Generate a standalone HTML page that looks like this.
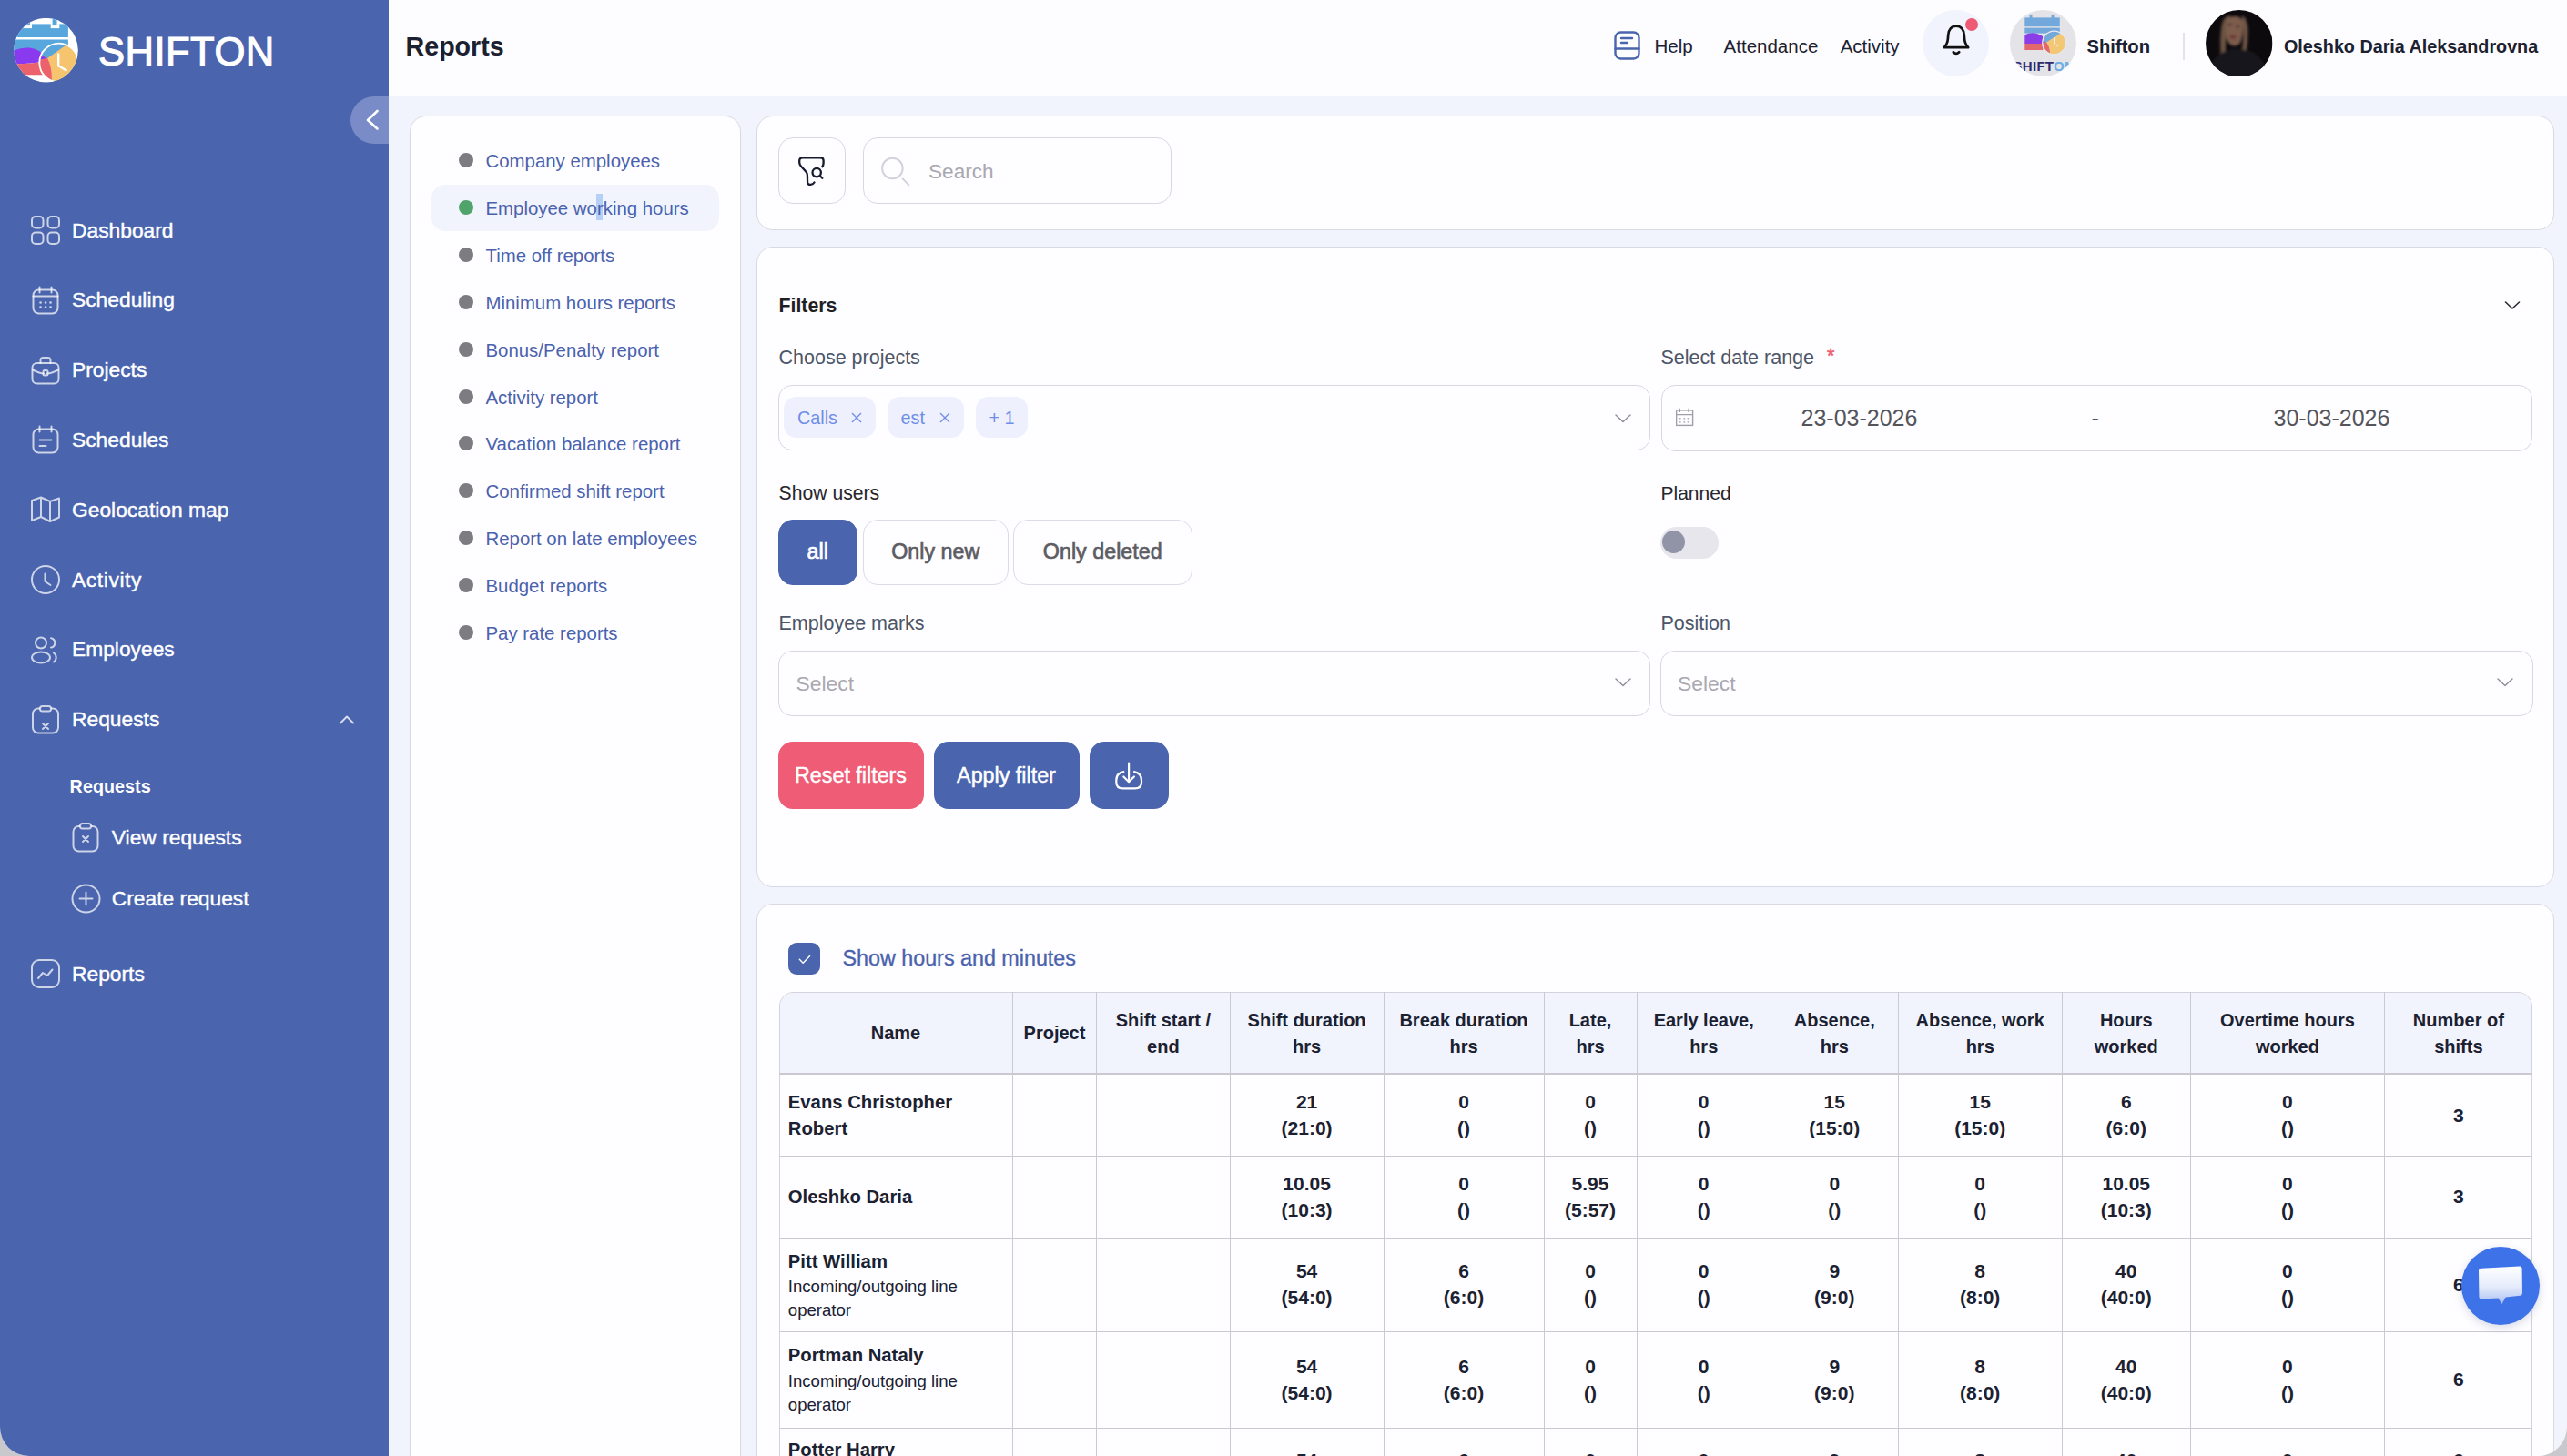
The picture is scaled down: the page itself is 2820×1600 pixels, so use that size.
<!DOCTYPE html>
<html><head><meta charset="utf-8">
<style>
*{box-sizing:border-box;margin:0;padding:0}
html,body{width:2820px;height:1600px;overflow:hidden;background:#c9c8cc}
body{font-family:"Liberation Sans",sans-serif;position:relative}
.abs{position:absolute}
.t{position:absolute;white-space:nowrap}
#win{position:absolute;left:0;top:0;width:2820px;height:1600px;overflow:hidden;border-radius:0 0 32px 32px;background:#f1f3fd}
#side{position:absolute;left:0;top:0;width:427px;height:1600px;background:#4a64ae}
#hdr{position:absolute;left:427px;top:0;width:2393px;height:106px;background:#fdfcfe}
.card{position:absolute;background:#fefdff;border:1.5px solid #d9d9e1;border-radius:18px}
.nav{position:absolute;left:0;height:40px;width:427px}
.nav .ic{position:absolute;left:34px;top:4px;width:32px;height:32px}
.nav .lb{position:absolute;left:79px;top:-0.5px;line-height:40px;font-size:22.8px;color:#fff;white-space:nowrap;-webkit-text-stroke:0.4px #fff}
.rl{position:absolute;left:0;height:40px;width:363px}
.rl .dot{position:absolute;left:52.6px;top:12px;width:16px;height:16px;border-radius:50%;background:#7d7c81}
.rl .lb{position:absolute;left:82.5px;top:1px;line-height:40px;font-size:20.4px;color:#4a62ad;white-space:nowrap}
.lbl{position:absolute;font-size:21.5px;color:#4c5668;line-height:30px;white-space:nowrap}
.box{position:absolute;border:1.5px solid #d8d8e2;border-radius:15px;background:#fefdff}
.btn{position:absolute;border-radius:16px;color:#fff;font-size:23.3px;line-height:74px;text-align:center;-webkit-text-stroke:0.45px #fff}
.chip{background:#eef1fd;border-radius:14px}
.chip span{position:absolute;top:7.5px;line-height:30px;font-size:19.8px;color:#6f8ee8;white-space:nowrap}
.chip svg.x{position:absolute;top:14.5px;width:16px;height:16px;fill:none;stroke:#6f8ee8;stroke-width:1.4}
.seg{border:1.5px solid #dcdbe6;border-radius:16px;background:#fefdff;font-size:23.3px;font-weight:400;color:#5c5c62;-webkit-text-stroke:0.65px #5c5c62;text-align:center;line-height:69px}
.seg.on{background:#4a64ae;border-color:#4a64ae;color:#fff;-webkit-text-stroke:0.7px #fff}
.th{position:absolute;text-align:center;font-size:20px;font-weight:700;line-height:29.5px;color:#1b2130;white-space:nowrap}
.tn{position:absolute;font-size:20.3px;font-weight:700;line-height:29.3px;color:#1b2130;white-space:nowrap}
.tp{position:absolute;font-size:18.6px;line-height:26px;color:#1b2130;white-space:nowrap}
.td{position:absolute;text-align:center;font-size:21px;font-weight:700;line-height:29.3px;color:#1b2130;white-space:nowrap}
</style></head><body>
<div id="win">
  <!-- SIDEBAR -->
  <div id="side">
    <svg class="abs" style="left:15.2px;top:19.8px" width="71" height="71" viewBox="0 0 71 71">
      <defs><clipPath id="lc"><circle cx="35.5" cy="35.2" r="35.3"/></clipPath>
      <clipPath id="cc"><circle cx="49.7" cy="49" r="20.6"/></clipPath></defs>
      <circle cx="35.5" cy="35.2" r="35.3" fill="#fff"/>
      <g clip-path="url(#lc)">
        <rect x="-2" y="6.4" width="61.9" height="14.6" fill="#57a6dc"/>
        <rect x="10.7" y="0.7" width="9.3" height="10.4" fill="#fff"/>
        <rect x="12.6" y="-1" width="5.3" height="9.1" fill="#57a6dc"/>
        <rect x="40.7" y="0.7" width="9.6" height="10.4" fill="#fff"/>
        <rect x="42.6" y="-1" width="4.9" height="9.1" fill="#57a6dc"/>
        <rect x="-2" y="23.5" width="61.9" height="14" fill="#57a6dc"/>
        <path d="M-2 36.5 C4 34 10 32.5 15 32.5 C22 32.5 27 35 32 39 L32 48 C22 49.5 10 50.5 -2 50 Z" fill="#8a3aee"/>
        <path d="M-2 50 C10 50.5 22 49.5 32 48 L32 62.2 L-2 62.2 Z" fill="#ec626c"/>
        <g clip-path="url(#cc)">
          <rect x="25" y="25" width="50" height="50" fill="#f6c46e"/>
          <path d="M37.1 44 L55.2 31.2 L72 18 L22 18 L22 36 Z" fill="#57a6dc"/>
          <path d="M37.1 44 L22 36.5 L22 47.5 Z" fill="#8a3aee"/>
          <path d="M37.1 44 L22 47.5 L22 75 L41.5 75 C42.5 62 41.5 52 37.1 44 Z" fill="#ec626c"/>
        </g>
        <circle cx="49.7" cy="49" r="21.4" fill="none" stroke="#fff" stroke-width="1.8"/>
        <path d="M49.2 38.6 L49.2 52.3 L58.5 57.8" fill="none" stroke="#fff" stroke-width="2.4"/>
      </g>
    </svg>
    <div class="t" style="left:108px;top:26.8px;font-size:43.6px;line-height:60px;color:#fff;font-weight:400;letter-spacing:0.45px;-webkit-text-stroke:1.1px #fff">SHIFTON</div>

    <div class="abs" style="left:385px;top:106px;width:42px;height:52px;background:#7a8cc8;border-radius:26px 0 0 26px"></div>
    <svg class="abs" style="left:385px;top:106px" width="42" height="52" viewBox="0 0 42 52"><path d="M29.5 16 L19 26 L29.5 35.5" fill="none" stroke="#fff" stroke-width="2.6" stroke-linecap="round" stroke-linejoin="round"/></svg>

    <!-- nav -->
    <div class="nav" style="top:233px">
      <svg class="ic" viewBox="0 0 32 32" fill="none" stroke="rgba(255,255,255,.72)" stroke-width="2"><rect x="1" y="1" width="12.5" height="12.5" rx="4"/><rect x="18.5" y="1" width="12.5" height="12.5" rx="4"/><rect x="1" y="18.5" width="12.5" height="12.5" rx="4"/><rect x="18.5" y="18.5" width="12.5" height="12.5" rx="4"/></svg>
      <div class="lb">Dashboard</div>
    </div>
    <div class="nav" style="top:309.8px">
      <svg class="ic" viewBox="0 0 32 32" fill="none" stroke="rgba(255,255,255,.72)" stroke-width="2" stroke-linecap="round"><rect x="2.5" y="4.5" width="27" height="26" rx="6"/><path d="M9.5 1.5v6M22.5 1.5v6M2.5 11.5h27"/><g stroke-width="2.6"><path d="M10.5 18.5h.1M16 18.5h.1M21.5 18.5h.1M10.5 23.5h.1M16 23.5h.1M21.5 23.5h.1"/></g></svg>
      <div class="lb">Scheduling</div>
    </div>
    <div class="nav" style="top:386.6px">
      <svg class="ic" viewBox="0 0 32 32" fill="none" stroke="rgba(255,255,255,.72)" stroke-width="2" stroke-linecap="round" stroke-linejoin="round"><rect x="1.5" y="8" width="29" height="22.5" rx="5"/><path d="M10.5 8V5a3 3 0 0 1 3-3h5a3 3 0 0 1 3 3v3"/><path d="M2 15.5 C8 18.5 11 19.5 14 19.5 M18 19.5 C21 19.5 24 18.5 30 15.5"/><rect x="13.5" y="16" width="5" height="5.5" rx="1.5"/></svg>
      <div class="lb">Projects</div>
    </div>
    <div class="nav" style="top:463.4px">
      <svg class="ic" viewBox="0 0 32 32" fill="none" stroke="rgba(255,255,255,.72)" stroke-width="2" stroke-linecap="round"><rect x="2.5" y="4.5" width="27" height="26" rx="6"/><path d="M9.5 1.5v6M22.5 1.5v6M9.5 16.5h13M9.5 23h7"/></svg>
      <div class="lb">Schedules</div>
    </div>
    <div class="nav" style="top:540.2px">
      <svg class="ic" viewBox="0 0 32 32" fill="none" stroke="rgba(255,255,255,.72)" stroke-width="2" stroke-linejoin="round"><path d="M1 6 L11 2.5 L21 7 L31 3.5 L31 24.5 L21 29 L11 24 L1 28 Z M11 2.5 V24 M21 7 V29"/></svg>
      <div class="lb">Geolocation map</div>
    </div>
    <div class="nav" style="top:617px">
      <svg class="ic" viewBox="0 0 32 32" fill="none" stroke="rgba(255,255,255,.72)" stroke-width="2" stroke-linecap="round" stroke-linejoin="round"><circle cx="16" cy="16" r="15"/><path d="M15.5 9.5v8.5l6 4"/></svg>
      <div class="lb" style="letter-spacing:0.6px">Activity</div>
    </div>
    <div class="nav" style="top:693.8px">
      <svg class="ic" viewBox="0 0 32 32" fill="none" stroke="rgba(255,255,255,.72)" stroke-width="2" stroke-linecap="round"><circle cx="11" cy="8.5" r="6"/><ellipse cx="11" cy="24.5" rx="10" ry="6"/><path d="M22 3.2a5.3 5.3 0 0 1 0 10.4M25 19.5a6 6 0 0 1 0 10"/></svg>
      <div class="lb">Employees</div>
    </div>
    <div class="nav" style="top:770.6px">
      <svg class="ic" viewBox="0 0 32 32" fill="none" stroke="rgba(255,255,255,.72)" stroke-width="2" stroke-linecap="round"><rect x="2" y="3.5" width="28" height="27" rx="6"/><rect x="10" y="1" width="12" height="5.5" rx="2.5" fill="#4a64ae"/><path d="M13 20l6 6M19 20l-6 6"/></svg>
      <div class="lb">Requests</div>
      <svg class="abs" style="left:371px;top:13px" width="20" height="14" viewBox="0 0 20 14"><path d="M3 10.5 L10 3.5 L17 10.5" fill="none" stroke="rgba(255,255,255,.8)" stroke-width="1.8" stroke-linecap="round" stroke-linejoin="round"/></svg>
    </div>
    <div class="t" style="left:76.6px;top:849px;line-height:30px;font-size:19.8px;font-weight:700;color:#fff">Requests</div>
    <div class="nav" style="top:900px">
      <svg class="ic" style="left:78.5px;top:3.5px;width:30px;height:33px" viewBox="0 0 30 33" fill="none" stroke="rgba(255,255,255,.72)" stroke-width="2" stroke-linecap="round"><rect x="1.5" y="4" width="27" height="27.5" rx="6"/><rect x="9" y="1" width="12" height="5.5" rx="2.5" fill="#4a64ae"/><path d="M12 15l6 6M18 15l-6 6"/></svg>
      <div class="lb" style="left:122.8px">View requests</div>
    </div>
    <div class="nav" style="top:967px">
      <svg class="ic" style="left:77.5px;top:3.5px;width:33px;height:33px" viewBox="0 0 33 33" fill="none" stroke="rgba(255,255,255,.72)" stroke-width="2" stroke-linecap="round"><circle cx="16.5" cy="16.5" r="15"/><path d="M16.5 9.5v14M9.5 16.5h14"/></svg>
      <div class="lb" style="left:122.8px">Create request</div>
    </div>
    <div class="nav" style="top:1050px">
      <svg class="ic" viewBox="0 0 32 32" fill="none" stroke="rgba(255,255,255,.72)" stroke-width="2" stroke-linecap="round" stroke-linejoin="round"><rect x="1" y="1" width="30" height="30" rx="8"/><path d="M8 21 L13 15 L18 18 L23.5 11.5"/></svg>
      <div class="lb">Reports</div>
    </div>
  </div>
  <!-- HEADER -->
  <div id="hdr">
    <div class="t" style="left:18.6px;top:36px;line-height:30px;font-size:28.6px;font-weight:700;color:#1b2130">Reports</div>
    <svg class="abs" style="left:1346px;top:34px" width="29" height="32" viewBox="0 0 29 32" fill="none" stroke="#4a64ae" stroke-width="2.4" stroke-linecap="round"><rect x="1.5" y="1.5" width="26" height="29" rx="6"/><path d="M1.5 19.5h26M8 8h12M8 13h7"/></svg>
    <div class="t" style="left:1390.5px;top:36px;line-height:30px;font-size:20.5px;color:#1b2130">Help</div>
    <div class="t" style="left:1466.6px;top:36px;line-height:30px;font-size:20.5px;color:#1b2130">Attendance</div>
    <div class="t" style="left:1594.7px;top:36px;line-height:30px;font-size:20.5px;color:#1b2130">Activity</div>
    <div class="abs" style="left:1685px;top:11px;width:73px;height:73px;border-radius:50%;background:#f1f3fd"></div>
    <svg class="abs" style="left:1704px;top:24px" width="36" height="40" viewBox="0 0 36 40" fill="none" stroke="#111" stroke-width="2.7" stroke-linecap="round" stroke-linejoin="round"><path d="M4.8 28.2 C7.6 25.2 8.6 22.5 8.9 18.5 L9.2 14.5 C9.7 8.2 13.2 4.6 18 4.6 C22.8 4.6 26.3 8.2 26.8 14.5 L27.1 18.5 C27.4 22.5 28.4 25.2 31.2 28.2 Z"/><path d="M14.8 33.2 Q18 36.6 21.2 33.2"/></svg>
    <div class="abs" style="left:1731.8px;top:19.8px;width:14px;height:14px;border-radius:50%;background:#ee5a74"></div>
    <!-- shifton avatar -->
    <svg class="abs" style="left:1781px;top:11px" width="73" height="73" viewBox="0 0 73 73">
      <defs><clipPath id="ac"><circle cx="36.5" cy="36.5" r="36.5"/></clipPath><clipPath id="ac2"><circle cx="48.6" cy="36" r="12.4"/></clipPath></defs>
      <g clip-path="url(#ac)">
        <rect width="73" height="73" fill="#e4e3e7"/>
        <rect x="16.3" y="8.4" width="38.5" height="9.8" fill="#72a8dc"/>
        <rect x="21.5" y="4.9" width="3" height="5" fill="#72a8dc"/><rect x="45.5" y="4.9" width="3" height="5" fill="#72a8dc"/>
        <rect x="16.3" y="19.6" width="38.5" height="6" fill="#72a8dc"/>
        <path d="M16.3 27.5 C22 24 30 24.5 36 29 L36 37 C28 37.5 22 37.5 16.3 37 Z" fill="#8b3ee8"/>
        <rect x="16.3" y="37" width="20" height="7" fill="#e2686c"/>
        <g clip-path="url(#ac2)"><rect x="34" y="22" width="30" height="30" fill="#f2c877"/>
          <path d="M40 35.5 L52 28 L60 22 L34 22 L34 33 Z" fill="#72a8dc"/>
          <path d="M40 35.5 L34 33 L34 37 Z" fill="#8b3ee8"/>
          <path d="M40 35.5 L34 37 L34 52 L44 52 C44.5 45 43 39 40 35.5 Z" fill="#e2686c"/></g>
        <circle cx="48.6" cy="36" r="12.9" fill="none" stroke="#e9e8ee" stroke-width="1.2"/>
        <path d="M48.5 30 L48.5 37 L53 40" fill="none" stroke="#f5eee0" stroke-width="1"/>
        <text x="3.5" y="66.5" font-family="Liberation Sans" font-weight="700" font-size="15" fill="#2e2a6e" letter-spacing="0.3">SHIFT<tspan fill="#6aaee6">ON</tspan></text>
      </g>
    </svg>
    <div class="t" style="left:1865.5px;top:36px;line-height:30px;font-size:20.2px;font-weight:700;color:#1b2130">Shifton</div>
    <div class="abs" style="left:1971px;top:36px;width:1.5px;height:30px;background:#e3e3ea"></div>
    <!-- user avatar -->
    <svg class="abs" style="left:1996.3px;top:10.6px" width="73.5" height="73.5" viewBox="0 0 73.5 73.5">
      <defs><clipPath id="uc"><circle cx="36.75" cy="36.75" r="36.7"/></clipPath>
      <filter id="bl" x="-20%" y="-20%" width="140%" height="140%"><feGaussianBlur stdDeviation="1.4"/></filter></defs>
      <g clip-path="url(#uc)">
        <rect width="73.5" height="73.5" fill="#0d0a0e"/>
        <g filter="url(#bl)">
          <path d="M17 52 C15.5 38 16 22 18.5 13 C21 8 24 6 27 6 L26 14 C23 20 22 34 22 50 Z" fill="#6a5242"/>
          <path d="M40 6 C44 8 46.5 14 46.5 22 C46.5 32 46 42 44 48 L40 44 C41.5 34 42 22 40 12 Z" fill="#6e5444"/>
          <path d="M22 14 C24 8 29 6.5 34 7 C38.5 7.5 41 11 41 17 C41 25 40 33 37.5 37 C35 39.5 31 40 28 38.5 C24.5 36.5 22.5 31 22 26 Z" fill="#7b5c4c"/>
          <path d="M24.5 16.5 L28.5 16 M33.5 17.5 L37 18.5" stroke="#2e2224" stroke-width="1.6"/>
          <ellipse cx="30" cy="29.5" rx="3.6" ry="2" fill="#6e3436"/>
          <path d="M2 74 C4 54 16 44 33 43 C50 43 64 50 70 74 Z" fill="#19161b"/>
        </g>
      </g>
    </svg>
    <div class="t" style="left:2082px;top:36px;line-height:30px;font-size:19.75px;font-weight:700;color:#1b2130">Oleshko Daria Aleksandrovna</div>
  </div>
  <!-- LEFT REPORT LIST PANEL -->
  <div class="card" style="left:450px;top:127px;width:364px;height:1520px">
    <div class="abs" style="left:22.5px;top:75px;width:316px;height:51px;border-radius:15px;background:#f1f3fd"></div>
    <div class="rl" style="top:28.0px"><div class="dot"></div><div class="lb">Company employees</div></div>
    <div class="rl" style="top:79.9px"><div class="dot" style="background:#4fa36b"></div><div class="abs" style="left:204.3px;top:5.5px;width:7px;height:28.8px;background:#b6cff8"></div><div class="lb">Employee working hours</div></div>
    <div class="rl" style="top:131.8px"><div class="dot"></div><div class="lb">Time off reports</div></div>
    <div class="rl" style="top:183.7px"><div class="dot"></div><div class="lb">Minimum hours reports</div></div>
    <div class="rl" style="top:235.6px"><div class="dot"></div><div class="lb">Bonus/Penalty report</div></div>
    <div class="rl" style="top:287.5px"><div class="dot"></div><div class="lb">Activity report</div></div>
    <div class="rl" style="top:339.4px"><div class="dot"></div><div class="lb">Vacation balance report</div></div>
    <div class="rl" style="top:391.3px"><div class="dot"></div><div class="lb">Confirmed shift report</div></div>
    <div class="rl" style="top:443.2px"><div class="dot"></div><div class="lb">Report on late employees</div></div>
    <div class="rl" style="top:495.1px"><div class="dot"></div><div class="lb">Budget reports</div></div>
    <div class="rl" style="top:547.0px"><div class="dot"></div><div class="lb">Pay rate reports</div></div>
  </div>
  <!-- TOP SEARCH CARD -->
  <div class="card" style="left:831px;top:127px;width:1974.5px;height:126px">
    <div class="box" style="left:22.5px;top:22.5px;width:74px;height:73px;border-radius:16px"></div>
    <svg class="abs" style="left:43px;top:41.5px" width="40" height="40" viewBox="0 0 40 40" fill="none" stroke="#161b2e" stroke-width="2.3" stroke-linecap="round" stroke-linejoin="round"><path d="M19.5 30.5 C17.8 33.2 13.2 34 12.1 30.8 L11.9 22.5 C11.9 20.5 11 19.2 9.8 18 L5.2 13 C3.8 11.5 3.2 10.2 3.2 8.5 L3.2 6.5 C3.2 4.6 4.6 3.3 6.5 3.3 L26.5 3.3 C28.4 3.3 29.6 4.6 29.6 6.5 L29.6 9 C29.6 10.8 29.2 12 28.3 13.2"/><circle cx="22.2" cy="19.6" r="4.7"/><path d="M25.8 23.3 L28.3 25.8"/></svg>
    <div class="box" style="left:116px;top:22.5px;width:338.5px;height:73px;border-radius:16px"></div>
    <svg class="abs" style="left:135px;top:43px" width="34" height="34" viewBox="0 0 34 34" fill="none" stroke="#d3d0de" stroke-width="1.9" stroke-linecap="round"><circle cx="13.4" cy="14" r="11.3"/><path d="M24.6 25.4 L31.4 32.3"/></svg>
    <div class="t" style="left:188px;top:45.5px;line-height:30px;font-size:22.6px;color:#a9a8b0">Search</div>
  </div>
  <!-- FILTER CARD -->
  <div class="card" style="left:831px;top:271px;width:1974.5px;height:704px">
    <div class="t" style="left:23.5px;top:48.5px;line-height:30px;font-size:21.3px;font-weight:700;color:#1f1f24">Filters</div>
    <svg class="abs" style="left:1915px;top:53px" width="26" height="20" viewBox="0 0 26 20"><path d="M5.5 7 L13 14 L20.5 7" fill="none" stroke="#2a2a30" stroke-width="1.6" stroke-linecap="round" stroke-linejoin="round"/></svg>
    <div class="lbl" style="left:23.5px;top:105.5px">Choose projects</div>
    <div class="lbl" style="left:992.5px;top:105.5px">Select date range <span style="color:#ee5a6f;position:relative;left:8px;top:-2px;-webkit-text-stroke:0.5px #ee5a6f">*</span></div>
    <!-- projects select -->
    <div class="box" style="left:22.5px;top:150.5px;width:958px;height:72.5px">
      <div class="abs chip" style="left:5px;top:12.5px;width:101px;height:45px"><span style="left:15.5px">Calls</span><svg class="x" style="left:72px"><path d="M3 3l10 10M13 3L3 13"/></svg></div>
      <div class="abs chip" style="left:119px;top:12.5px;width:84px;height:45px"><span style="left:15px">est</span><svg class="x" style="left:55px"><path d="M3 3l10 10M13 3L3 13"/></svg></div>
      <div class="abs chip" style="left:216px;top:12.5px;width:57px;height:45px"><span style="left:15px">+ 1</span></div>
      <svg class="abs" style="left:915px;top:26px" width="24" height="20" viewBox="0 0 24 20"><path d="M4 6 L12 13.5 L20 6" fill="none" stroke="#8e8e98" stroke-width="1.4" stroke-linecap="round" stroke-linejoin="round"/></svg>
    </div>
    <!-- date range -->
    <div class="box" style="left:993px;top:151px;width:957px;height:72.5px">
      <svg class="abs" style="left:15.3px;top:23.8px" width="22" height="22" viewBox="0 0 22 22" fill="none" stroke="#a09fa7" stroke-width="1.4"><rect x="0.6" y="2.9" width="18" height="16.5"/><path d="M0.6 7.6h18M4.3 0.8v4.2M14.1 0.8v4.2"/><path d="M3.8 11.8h1.8M8.4 11.8h1.8M12.6 11.8h1.8M3.8 15.9h1.8M8.4 15.9h1.8M12.6 15.9h1.8" stroke-width="1.2"/></svg>
      <div class="t" style="left:152.5px;top:19.5px;line-height:30px;font-size:25px;color:#54545b">23-03-2026</div>
      <div class="t" style="left:471.5px;top:19.5px;line-height:30px;font-size:25px;color:#54545b">-</div>
      <div class="t" style="left:671.5px;top:19.5px;line-height:30px;font-size:25px;color:#54545b">30-03-2026</div>
    </div>
    <!-- show users -->
    <div class="t" style="left:23.5px;top:255px;line-height:30px;font-size:21.2px;color:#26262b">Show users</div>
    <div class="t" style="left:992.5px;top:255px;line-height:30px;font-size:21px;color:#26262b">Planned</div>
    <div class="abs seg on" style="left:22.5px;top:299px;width:87.5px;height:72px">all</div>
    <div class="abs seg" style="left:115.5px;top:299px;width:160.5px;height:72px">Only new</div>
    <div class="abs seg" style="left:281px;top:299px;width:196.5px;height:72px">Only deleted</div>
    <div class="abs" style="left:992px;top:306.5px;width:64px;height:35px;border-radius:18px;background:#e7e6ec"></div>
    <div class="abs" style="left:994.3px;top:311.3px;width:25px;height:25px;border-radius:50%;background:#9094a6"></div>
    <!-- marks / position -->
    <div class="lbl" style="left:23.5px;top:397.5px">Employee marks</div>
    <div class="lbl" style="left:992.5px;top:397.5px">Position</div>
    <div class="box" style="left:22.5px;top:442.5px;width:958px;height:72px">
      <div class="t" style="left:19px;top:20px;line-height:30px;font-size:22.9px;color:#aaa9b0">Select</div>
      <svg class="abs" style="left:915px;top:24px" width="24" height="20" viewBox="0 0 24 20"><path d="M4 6 L12 13.5 L20 6" fill="none" stroke="#8e8e98" stroke-width="1.4" stroke-linecap="round" stroke-linejoin="round"/></svg>
    </div>
    <div class="box" style="left:992px;top:442.5px;width:958.5px;height:72px">
      <div class="t" style="left:18px;top:20px;line-height:30px;font-size:22.9px;color:#aaa9b0">Select</div>
      <svg class="abs" style="left:914.5px;top:24px" width="24" height="20" viewBox="0 0 24 20"><path d="M4 6 L12 13.5 L20 6" fill="none" stroke="#8e8e98" stroke-width="1.4" stroke-linecap="round" stroke-linejoin="round"/></svg>
    </div>
    <!-- buttons -->
    <div class="btn" style="left:22.5px;top:543px;width:160px;height:74px;background:#ee5c76">Reset filters</div>
    <div class="btn" style="left:193.5px;top:543px;width:160px;height:74px;background:#4a64ae">Apply filter</div>
    <div class="btn" style="left:364.5px;top:543px;width:87px;height:74px;background:#4a64ae"></div>
    <svg class="abs" style="left:389px;top:561.7px" width="40" height="44" viewBox="0 0 40 44" fill="none" stroke="#fff" stroke-width="2.2" stroke-linecap="round" stroke-linejoin="round"><path d="M19.1 4.6 V25.2 M13.3 19.5 L19.1 25.3 L24.9 19.5"/><path d="M13.3 14.2 C8.5 15.2 5.3 18.5 5.3 23.5 V25.5 C5.3 29.8 8 32.4 12.5 32.4 H25.8 C30.3 32.4 33 29.8 33 25.5 V23.5 C33 18.5 29.8 15.2 25 14.2"/></svg>
  </div>
  <!-- TABLE CARD -->
  <div class="card" style="left:831px;top:993px;width:1974.5px;height:700px">
    <div class="abs" style="left:33.8px;top:41.5px;width:35.5px;height:35.5px;border-radius:9px;background:#4a64ae"></div>
    <svg class="abs" style="left:34.3px;top:41.5px" width="35" height="35" viewBox="0 0 35 35"><path d="M12.3 18.3 L16.2 22.3 L23.6 14.4" fill="none" stroke="#fff" stroke-width="1.4" stroke-linecap="round" stroke-linejoin="round"/></svg>
    <div class="t" style="left:93.5px;top:43.5px;line-height:30px;font-size:23.3px;color:#4a62ad;-webkit-text-stroke:0.35px #4a62ad">Show hours and minutes</div>
  </div>
<!-- TABLE -->
<div class="abs" style="left:855.5px;top:1090.0px;width:1926.6999999999998px;height:610.0px;border:1.5px solid #d4d3db;border-bottom:none;border-radius:16px 16px 0 0;overflow:hidden">
<div class="abs" style="left:0;top:0;width:100%;height:88.5px;background:#f1f3fd"></div>
</div>
<div class="abs" style="left:1112px;top:1090.0px;width:1px;height:510.0px;background:#cbcad0"></div>
<div class="abs" style="left:1204px;top:1090.0px;width:1px;height:510.0px;background:#cbcad0"></div>
<div class="abs" style="left:1351px;top:1090.0px;width:1px;height:510.0px;background:#cbcad0"></div>
<div class="abs" style="left:1520px;top:1090.0px;width:1px;height:510.0px;background:#cbcad0"></div>
<div class="abs" style="left:1696px;top:1090.0px;width:1px;height:510.0px;background:#cbcad0"></div>
<div class="abs" style="left:1798px;top:1090.0px;width:1px;height:510.0px;background:#cbcad0"></div>
<div class="abs" style="left:1945px;top:1090.0px;width:1px;height:510.0px;background:#cbcad0"></div>
<div class="abs" style="left:2085px;top:1090.0px;width:1px;height:510.0px;background:#cbcad0"></div>
<div class="abs" style="left:2265px;top:1090.0px;width:1px;height:510.0px;background:#cbcad0"></div>
<div class="abs" style="left:2406px;top:1090.0px;width:1px;height:510.0px;background:#cbcad0"></div>
<div class="abs" style="left:2619px;top:1090.0px;width:1px;height:510.0px;background:#cbcad0"></div>
<div class="abs" style="left:855.5px;top:1179px;width:1926.6999999999998px;height:2px;background:#c9c9cf"></div>
<div class="abs" style="left:855.5px;top:1270px;width:1926.6999999999998px;height:1px;background:#cbcad0"></div>
<div class="abs" style="left:855.5px;top:1360px;width:1926.6999999999998px;height:1px;background:#cbcad0"></div>
<div class="abs" style="left:855.5px;top:1463px;width:1926.6999999999998px;height:1px;background:#cbcad0"></div>
<div class="abs" style="left:855.5px;top:1569px;width:1926.6999999999998px;height:1px;background:#cbcad0"></div>
<div class="th" style="left:855.5px;top:1121.25px;width:256.9000000000001px">Name</div>
<div class="th" style="left:1112.4px;top:1121.25px;width:92.19999999999982px">Project</div>
<div class="th" style="left:1204.6px;top:1106.5px;width:146.60000000000014px">Shift start /<br>end</div>
<div class="th" style="left:1351.2px;top:1106.5px;width:168.79999999999995px">Shift duration<br>hrs</div>
<div class="th" style="left:1520px;top:1106.5px;width:176px">Break duration<br>hrs</div>
<div class="th" style="left:1696px;top:1106.5px;width:102px">Late,<br>hrs</div>
<div class="th" style="left:1798px;top:1106.5px;width:147.4000000000001px">Early leave,<br>hrs</div>
<div class="th" style="left:1945.4px;top:1106.5px;width:139.79999999999973px">Absence,<br>hrs</div>
<div class="th" style="left:2085.2px;top:1106.5px;width:180.0px">Absence, work<br>hrs</div>
<div class="th" style="left:2265.2px;top:1106.5px;width:141.20000000000027px">Hours<br>worked</div>
<div class="th" style="left:2406.4px;top:1106.5px;width:213.0999999999999px">Overtime hours<br>worked</div>
<div class="th" style="left:2619.5px;top:1106.5px;width:162.69999999999982px">Number of<br>shifts</div>
<div class="tn" style="left:865.8px;top:1196.8500000000001px">Evans Christopher<br>Robert</div>
<div class="td" style="left:1351.2px;top:1195.8500000000001px;width:168.79999999999995px">21<br>(21:0)</div>
<div class="td" style="left:1520px;top:1195.8500000000001px;width:176px">0<br>()</div>
<div class="td" style="left:1696px;top:1195.8500000000001px;width:102px">0<br>()</div>
<div class="td" style="left:1798px;top:1195.8500000000001px;width:147.4000000000001px">0<br>()</div>
<div class="td" style="left:1945.4px;top:1195.8500000000001px;width:139.79999999999973px">15<br>(15:0)</div>
<div class="td" style="left:2085.2px;top:1195.8500000000001px;width:180.0px">15<br>(15:0)</div>
<div class="td" style="left:2265.2px;top:1195.8500000000001px;width:141.20000000000027px">6<br>(6:0)</div>
<div class="td" style="left:2406.4px;top:1195.8500000000001px;width:213.0999999999999px">0<br>()</div>
<div class="td" style="left:2619.5px;top:1210.5px;width:162.69999999999982px">3</div>
<div class="tn" style="left:865.8px;top:1301.25px">Oleshko Daria</div>
<div class="td" style="left:1351.2px;top:1285.6000000000001px;width:168.79999999999995px">10.05<br>(10:3)</div>
<div class="td" style="left:1520px;top:1285.6000000000001px;width:176px">0<br>()</div>
<div class="td" style="left:1696px;top:1285.6000000000001px;width:102px">5.95<br>(5:57)</div>
<div class="td" style="left:1798px;top:1285.6000000000001px;width:147.4000000000001px">0<br>()</div>
<div class="td" style="left:1945.4px;top:1285.6000000000001px;width:139.79999999999973px">0<br>()</div>
<div class="td" style="left:2085.2px;top:1285.6000000000001px;width:180.0px">0<br>()</div>
<div class="td" style="left:2265.2px;top:1285.6000000000001px;width:141.20000000000027px">10.05<br>(10:3)</div>
<div class="td" style="left:2406.4px;top:1285.6000000000001px;width:213.0999999999999px">0<br>()</div>
<div class="td" style="left:2619.5px;top:1300.25px;width:162.69999999999982px">3</div>
<div class="tn" style="left:865.8px;top:1371.8px">Pitt William</div>
<div class="tp" style="left:865.8px;top:1401.1px">Incoming/outgoing line<br>operator</div>
<div class="td" style="left:1351.2px;top:1381.9px;width:168.79999999999995px">54<br>(54:0)</div>
<div class="td" style="left:1520px;top:1381.9px;width:176px">6<br>(6:0)</div>
<div class="td" style="left:1696px;top:1381.9px;width:102px">0<br>()</div>
<div class="td" style="left:1798px;top:1381.9px;width:147.4000000000001px">0<br>()</div>
<div class="td" style="left:1945.4px;top:1381.9px;width:139.79999999999973px">9<br>(9:0)</div>
<div class="td" style="left:2085.2px;top:1381.9px;width:180.0px">8<br>(8:0)</div>
<div class="td" style="left:2265.2px;top:1381.9px;width:141.20000000000027px">40<br>(40:0)</div>
<div class="td" style="left:2406.4px;top:1381.9px;width:213.0999999999999px">0<br>()</div>
<div class="td" style="left:2619.5px;top:1396.55px;width:162.69999999999982px">6</div>
<div class="tn" style="left:865.8px;top:1475.2px">Portman Nataly</div>
<div class="tp" style="left:865.8px;top:1504.5px">Incoming/outgoing line<br>operator</div>
<div class="td" style="left:1351.2px;top:1486.5000000000002px;width:168.79999999999995px">54<br>(54:0)</div>
<div class="td" style="left:1520px;top:1486.5000000000002px;width:176px">6<br>(6:0)</div>
<div class="td" style="left:1696px;top:1486.5000000000002px;width:102px">0<br>()</div>
<div class="td" style="left:1798px;top:1486.5000000000002px;width:147.4000000000001px">0<br>()</div>
<div class="td" style="left:1945.4px;top:1486.5000000000002px;width:139.79999999999973px">9<br>(9:0)</div>
<div class="td" style="left:2085.2px;top:1486.5000000000002px;width:180.0px">8<br>(8:0)</div>
<div class="td" style="left:2265.2px;top:1486.5000000000002px;width:141.20000000000027px">40<br>(40:0)</div>
<div class="td" style="left:2406.4px;top:1486.5000000000002px;width:213.0999999999999px">0<br>()</div>
<div class="td" style="left:2619.5px;top:1501.15px;width:162.69999999999982px">6</div>
<div class="tn" style="left:865.8px;top:1578.9px">Potter Harry</div>
<div class="tp" style="left:865.8px;top:1608.2px">Incoming/outgoing line<br>operator</div>
<div class="td" style="left:1351.2px;top:1589.75px;width:168.79999999999995px">54<br>(54:0)</div>
<div class="td" style="left:1520px;top:1589.75px;width:176px">6<br>(6:0)</div>
<div class="td" style="left:1696px;top:1589.75px;width:102px">0<br>()</div>
<div class="td" style="left:1798px;top:1589.75px;width:147.4000000000001px">0<br>()</div>
<div class="td" style="left:1945.4px;top:1589.75px;width:139.79999999999973px">9<br>(9:0)</div>
<div class="td" style="left:2085.2px;top:1589.75px;width:180.0px">8<br>(8:0)</div>
<div class="td" style="left:2265.2px;top:1589.75px;width:141.20000000000027px">40<br>(40:0)</div>
<div class="td" style="left:2406.4px;top:1589.75px;width:213.0999999999999px">0<br>()</div>
<div class="td" style="left:2619.5px;top:1589.75px;width:162.69999999999982px">6</div>
  <!-- CHAT -->
  <div class="abs" style="left:2704px;top:1370px;width:86px;height:86px;border-radius:50%;background:#3e72e8;box-shadow:0 3px 10px rgba(40,60,120,.18)"></div>
  <svg class="abs" style="left:2704px;top:1370px" width="86" height="86" viewBox="0 0 86 86">
    <defs><linearGradient id="cg" x1="0" y1="0" x2="0" y2="1"><stop offset="0" stop-color="#ffffff"/><stop offset="0.55" stop-color="#e4ebfb"/><stop offset="1" stop-color="#a9bff2"/></linearGradient></defs>
    <path d="M19 26.5 C19 25 20 24 21.5 23.8 L64 21.5 C65.5 21.4 66.5 22.4 66.6 24 L67 51 C67 52.5 66 53.5 64.5 53.7 L48.5 55.5 L44.5 63 L40.5 56.5 L22 57.5 C20.5 57.6 19.5 56.6 19.4 55 Z" fill="url(#cg)"/>
  </svg>
</div>
</body></html>
